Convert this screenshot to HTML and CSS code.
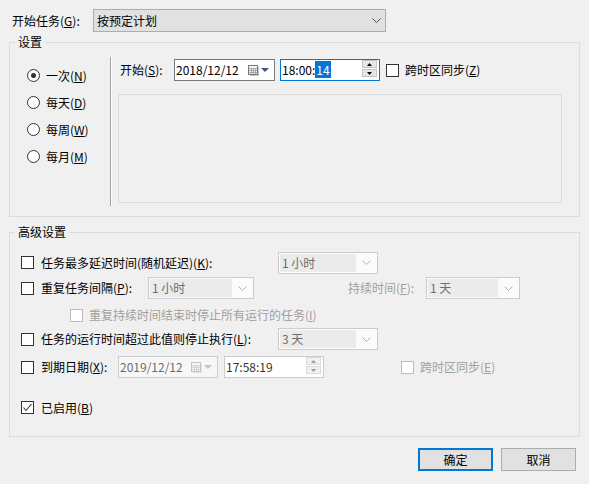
FILE: index.html
```html
<!DOCTYPE html>
<html lang="zh-CN">
<head>
<meta charset="utf-8">
<title>新建触发器</title>
<link rel="stylesheet" href="styles.css">
</head>
<body>
<div class="dialog">
  <div class="top-row">
    <span class="top-label">开始任务(<u>G</u>):</span>
    <div class="combo-main">
      <span class="combo-text">按预定计划</span>
      <svg class="chev" width="9" height="5" viewBox="0 0 9 5"><polyline points="0.5,0.5 4.5,4.5 8.5,0.5" fill="none" stroke="#4a4a4a"/></svg>
    </div>
  </div>

  <div class="group group-settings">
    <div class="group-title">设置</div>
    <div class="settings-body">
      <div class="radio-col">
        <div class="radio-row"><span class="radio checked"><span class="dot"></span></span><span>一次(<u>N</u>)</span></div>
        <div class="radio-row"><span class="radio"></span><span>每天(<u>D</u>)</span></div>
        <div class="radio-row"><span class="radio"></span><span>每周(<u>W</u>)</span></div>
        <div class="radio-row"><span class="radio"></span><span>每月(<u>M</u>)</span></div>
      </div>
      <div class="separator"></div>
      <div class="detail-col">
        <div class="start-row">
          <span class="start-label">开始(<u>S</u>):</span>
          <div class="datebox">
            <span class="field-text">2018/12/12</span>
            <svg class="cal" width="11" height="11" viewBox="0 0 11 11"><rect x="0.5" y="0.5" width="9" height="9" fill="#f4f4f4" stroke="#7a7a7a"/><path d="M1 3.5h8M1 5.5h8M1 7.5h8M3.5 3v6M5.5 3v6M7.5 3v6" stroke="#a9a9a9"/><path d="M10.5 2v9M2 10.5h9" stroke="#c8c8c8"/></svg>
            <svg class="tri" width="8" height="4" viewBox="0 0 8 4"><path d="M0 0h8l-4 4z" fill="#3f5680"/></svg>
          </div>
          <div class="timebox focused">
            <span class="field-text">18:00:<span class="sel">14</span></span>
            <div class="spinner">
              <span class="spin"><svg width="5" height="3" viewBox="0 0 5 3"><path d="M0 3h5L2.5 0z" fill="#000"/></svg></span>
              <span class="spin"><svg width="5" height="3" viewBox="0 0 5 3"><path d="M0 0h5L2.5 3z" fill="#000"/></svg></span>
            </div>
          </div>
          <span class="checkbox cb-tz"></span><span>跨时区同步(<u>Z</u>)</span>
        </div>
        <div class="detail-panel"></div>
      </div>
    </div>
  </div>

  <div class="group group-advanced">
    <div class="group-title">高级设置</div>
    <div class="adv-body">
      <div class="adv-row row1">
        <span class="checkbox"></span>
        <span class="lbl lbl-wide">任务最多延迟时间(随机延迟)(<u>K</u>):</span>
        <div class="combo-dis w100"><span class="cd-text">1 小时</span><svg class="chev" width="9" height="5" viewBox="0 0 9 5"><polyline points="0.5,0.5 4.5,4.5 8.5,0.5" fill="none" stroke="#b4b4b4"/></svg></div>
      </div>
      <div class="adv-row row2">
        <span class="checkbox"></span>
        <span class="lbl lbl-rep">重复任务间隔(<u>P</u>):</span>
        <div class="combo-dis w106"><span class="cd-text">1 小时</span><svg class="chev" width="9" height="5" viewBox="0 0 9 5"><polyline points="0.5,0.5 4.5,4.5 8.5,0.5" fill="none" stroke="#b4b4b4"/></svg></div>
        <span class="lbl lbl-dur dis">持续时间(<u>F</u>):</span>
        <div class="combo-dis w94"><span class="cd-text">1 天</span><svg class="chev" width="9" height="5" viewBox="0 0 9 5"><polyline points="0.5,0.5 4.5,4.5 8.5,0.5" fill="none" stroke="#b4b4b4"/></svg></div>
      </div>
      <div class="adv-row row3">
        <span class="checkbox cb-dis"></span>
        <span class="dis">重复持续时间结束时停止所有运行的任务(<u>I</u>)</span>
      </div>
      <div class="adv-row row4">
        <span class="checkbox"></span>
        <span class="lbl lbl-wide">任务的运行时间超过此值则停止执行(<u>L</u>):</span>
        <div class="combo-dis w100"><span class="cd-text">3 天</span><svg class="chev" width="9" height="5" viewBox="0 0 9 5"><polyline points="0.5,0.5 4.5,4.5 8.5,0.5" fill="none" stroke="#b4b4b4"/></svg></div>
      </div>
      <div class="adv-row row5">
        <span class="checkbox"></span>
        <span class="lbl lbl-exp">到期日期(<u>X</u>):</span>
        <div class="datebox dis-box">
          <span class="field-text">2019/12/12</span>
          <svg class="cal" width="11" height="11" viewBox="0 0 11 11"><rect x="0.5" y="0.5" width="9" height="9" fill="#f7f7f7" stroke="#c4c4c4"/><path d="M1 3.5h8M1 5.5h8M1 7.5h8M3.5 3v6M5.5 3v6M7.5 3v6" stroke="#d4d4d4"/><path d="M10.5 2v9M2 10.5h9" stroke="#e0e0e0"/></svg>
          <svg class="tri" width="8" height="4" viewBox="0 0 8 4"><path d="M0 0h8l-4 4z" fill="#c4c4c4"/></svg>
        </div>
        <div class="timebox dis-box">
          <span class="field-text">17:58:19</span>
          <div class="spinner">
            <span class="spin"><svg width="5" height="3" viewBox="0 0 5 3"><path d="M0 3h5L2.5 0z" fill="#9a9a9a"/></svg></span>
            <span class="spin"><svg width="5" height="3" viewBox="0 0 5 3"><path d="M0 0h5L2.5 3z" fill="#9a9a9a"/></svg></span>
          </div>
        </div>
        <span class="checkbox cb-dis cb-tz2"></span><span class="dis">跨时区同步(<u>E</u>)</span>
      </div>
      <div class="adv-row row6">
        <span class="checkbox"><svg width="11" height="11" viewBox="0 0 11 11"><polyline points="1.5,5.5 4,8.5 9.5,2" fill="none" stroke="#333" stroke-width="1.1"/></svg></span>
        <span>已启用(<u>B</u>)</span>
      </div>
    </div>
  </div>

  <div class="buttons">
    <button class="btn btn-default">确定</button>
    <button class="btn">取消</button>
  </div>
</div>
</body>
</html>
```

FILE: styles.css
```css
* { box-sizing: border-box; }
html, body { margin: 0; padding: 0; }
body {
  width: 589px;
  height: 484px;
  overflow: hidden;
  background: #f0f0f0;
  font-family: "Noto Sans CJK SC", "Noto Sans", sans-serif;
  font-size: 12px;
  line-height: 16px;
  color: #000;
}
u { text-decoration: underline; text-underline-offset: 1px; }

.dialog { padding-top: 9px; }

/* top row */
.top-row { display: flex; align-items: center; padding-left: 12px; }
.top-label { width: 81px; }
.combo-main {
  width: 293px; height: 23px;
  background: #e1e1e1; border: 1px solid #adadad;
  display: flex; align-items: center; padding-left: 3px;
}
.combo-text { flex: 1; }
.combo-main .chev { margin-right: 4px; }

/* group boxes */
.group { margin-left: 9px; width: 571px; border: 1px solid #dcdcdc; }
.group-title {
  width: fit-content; height: 16px;
  margin: -9px 0 0 5px; padding: 0 3px;
  background: #f0f0f0;
}
.group-settings { margin-top: 10px; height: 175px; }
.settings-body { display: flex; }

.radio-col { width: 100px; padding: 12px 0 0 17px; display: flex; flex-direction: column; }
.radio-row { height: 27px; display: flex; align-items: center; }
.radio {
  width: 13px; height: 13px; border: 1px solid #333; border-radius: 50%;
  background: #fff; margin-right: 6px;
  display: flex; align-items: center; justify-content: center;
}
.dot { width: 5px; height: 5px; border-radius: 50%; background: #333; }

.separator {
  width: 2px; height: 149px; margin-top: 7px;
  border-left: 1px solid #a0a0a0; border-right: 1px solid #fff;
}

.detail-col { flex: 1; padding-top: 9px; }
.start-row { display: flex; align-items: center; height: 22px; padding-left: 8px; }
.start-label { width: 54px; }

.datebox {
  width: 101px; height: 22px; background: #fff; border: 1px solid #7a7a7a;
  display: flex; align-items: center; padding-left: 1px;
}
.field-text { flex: 1; }
.datebox .cal { margin-right: 2px; }
.datebox .tri { margin-right: 5px; }

.timebox {
  width: 100px; height: 22px; margin-left: 5px; background: #fff;
  border: 1px solid #7a7a7a;
  display: flex; align-items: center; padding-left: 1px;
}
.timebox.focused { border-color: #0078d7; }
.sel { background: #0078d7; color: #fff; padding: 0 1px; }

.spinner {
  align-self: flex-start; margin-right: 2px;
  display: flex; flex-direction: column; gap: 1px;
}
.spin {
  width: 15px; height: 8px; background: #e6e6e6; border: 1px solid #c4c4c4;
  display: flex; align-items: center; justify-content: center;
}

.checkbox {
  width: 13px; height: 13px; flex: none;
  border: 1px solid #333; background: #fff; margin-right: 7px;
  display: flex; align-items: center; justify-content: center;
}
.cb-tz { margin-left: 6px; margin-right: 6px; }

.detail-panel {
  margin: 13px 0 0 6px; width: 444px; height: 109px;
  border: 1px solid #dcdcdc;
}

/* advanced */
.group-advanced { margin-top: 15px; height: 205px; }
.adv-body { padding-left: 11px; }
.adv-row { display: flex; align-items: center; }
.row1 { margin-top: 11px; height: 23px; }
.row2 { margin-top: 3px; height: 22px; }
.row3 { margin-top: 6px; height: 20px; }
.row4 { margin-top: 3px; height: 22px; }
.row5 { margin-top: 6px; height: 22px; }
.row6 { margin-top: 19px; height: 21px; }

.lbl-wide { width: 237px; }
.lbl-rep { width: 107px; }
.lbl-dur { margin-left: 94px; width: 78px; }
.lbl-exp { width: 77px; }
.dis { color: #a0a0a0; }

.combo-dis {
  height: 22px; background: #fbfbfb; border: 1px solid #cccccc;
  display: flex; align-items: center; padding: 1px;
  color: #6d6d6d;
}
.cd-text {
  align-self: stretch; flex: 1; background: #ebebeb;
  padding-left: 2px; display: flex; align-items: center;
  margin-right: 6px;
}
.combo-dis .chev { margin-right: 5px; }
.w100 { width: 100px; }
.w106 { width: 106px; }
.w94 { width: 94px; }

.row3 .checkbox { margin-left: 49px; margin-right: 6px; }
.cb-dis { border-color: #bcbcbc; background: #fff; }

.dis-box { border-color: #cccccc; color: #6d6d6d; width: 100px; }
.row5 .timebox { margin-left: 6px; background: #fff; color: #333; }
.row5 .datebox { background: #f7f7f7; }
.row5 .spin { background: #f0f0f0; border-color: #dadada; }
.cb-tz2 { margin-left: 77px; margin-right: 6px; }

/* buttons */
.buttons {
  display: flex; justify-content: flex-end; gap: 8px;
  margin-top: 11px; padding-right: 13px;
}
.btn {
  width: 75px; height: 23px; margin: 0; padding: 0;
  background: #e1e1e1; border: 1px solid #adadad;
  font: inherit; color: #000;
  display: flex; align-items: center; justify-content: center;
}
.btn-default { border: 2px solid #0078d7; }
```
